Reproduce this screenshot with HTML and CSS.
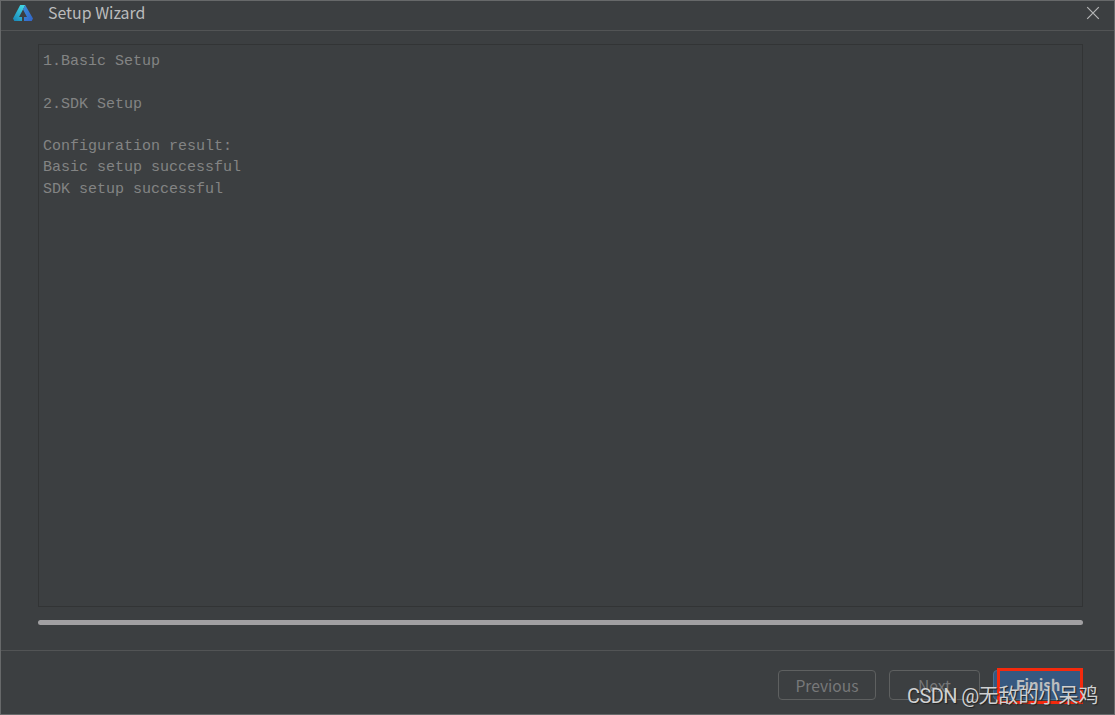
FILE: index.html
```html
<!DOCTYPE html>
<html lang="en">
<head>
<meta charset="utf-8">
<title>Setup Wizard</title>
<link rel="stylesheet" href="styles.css">
</head>
<body>
<div class="window">
  <header class="titlebar">
    <svg class="logo" width="22" height="18" viewBox="0 0 22 18">
      <defs>
        <linearGradient id="left" x1="0" y1="1" x2="0.6" y2="0"><stop offset="0" stop-color="#1785b8"/><stop offset="1" stop-color="#40d3e2"/></linearGradient>
        <linearGradient id="right" x1="0" y1="0" x2="1" y2="1"><stop offset="0" stop-color="#3a8fdb"/><stop offset="1" stop-color="#3263c6"/></linearGradient>
      </defs>
      <path d="M8.2 1h5L11 5.4 7 13h3v4H2.3L1 14.6z" fill="url(#left)"/>
      <path d="M13.2 1 21 14.6 19.7 17H12v-4h3l-4-7.6z" fill="url(#right)"/>
    </svg>
    <span class="title">Setup Wizard</span>
    <svg class="close" width="14" height="14" viewBox="0 0 14 14"><path d="M1.2 1.2 12.8 12.8M12.8 1.2 1.2 12.8" fill="none" stroke="#b5b6b7" stroke-width="1.2"/></svg>
  </header>
  <main class="content">
    <pre class="log">1.Basic Setup

2.SDK Setup

Configuration result:
Basic setup successful
SDK setup successful</pre>
    <div class="progress"></div>
  </main>
  <footer class="actions">
    <button class="button previous">Previous</button>
    <button class="button next">Next</button>
    <button class="button finish">Finish</button>
  </footer>
  <div class="highlight"></div>
  <div class="watermark"><span class="handle">CSDN @</span>无敌的小呆鸡</div>
</div>
</body>
</html>
```
FILE: styles.css
```css
* { box-sizing: border-box; }
body { margin: 0; background: #3c3f41; }
.window {
  position: relative;
  display: flex;
  flex-direction: column;
  width: 1115px;
  height: 715px;
  border: 1px solid #67696a;
  background: #3c3f41;
  overflow: hidden;
  font-family: "Noto Sans", "Noto Sans CJK SC", sans-serif;
}
.titlebar {
  display: flex;
  align-items: center;
  height: 30px;
  padding: 0 14px 5px 11px;
  border-bottom: 1px solid #525455;
}
.logo { flex: none; }
.title {
  margin-left: 14px;
  font: 15.9px/22px "Noto Sans CJK SC", sans-serif;
  color: #bbbcbd;
}
.close { margin-left: auto; }
.content {
  flex: 1;
  display: flex;
  flex-direction: column;
  padding: 13px 31px 25px 37px;
}
.log {
  flex: 1;
  margin: 0;
  padding: 6px 4px;
  border: 1px solid #323435;
  color: #838484;
  font: 15px/21.3px "Courier New", "Liberation Mono", monospace;
}
.progress {
  height: 5px;
  margin-top: 13px;
  border-radius: 2.5px;
  background: #a1a0a2;
}
.actions {
  display: flex;
  align-items: flex-start;
  justify-content: flex-end;
  gap: 13px;
  height: 64px;
  padding: 19px 31px 0 0;
  border-top: 1px solid #525455;
}
.button {
  height: 30px;
  padding: 0;
  border: 1px solid #5e6060;
  border-radius: 4px;
  background: transparent;
  color: #777879;
  font: 15.6px/26px "Noto Sans CJK SC", sans-serif;
}
.previous { width: 98px; }
.next { width: 91px; }
.finish {
  width: 90px;
  border-color: #4c708c;
  background: #365880;
  color: #bbbcbd;
  font-size: 15px;
  font-weight: 700;
}
.highlight {
  position: absolute;
  left: 996px;
  top: 667px;
  width: 86px;
  height: 36px;
  border: 3px solid #f52a0d;
}
.watermark {
  position: absolute;
  left: 906px;
  top: 680px;
  white-space: nowrap;
  color: #d0d1d2;
  font: 20px/28px "Noto Sans CJK SC", sans-serif;
  text-shadow: 1px 1px 1px #222;
}
.handle { font-family: Roboto, sans-serif; letter-spacing: -0.6px; }
```
